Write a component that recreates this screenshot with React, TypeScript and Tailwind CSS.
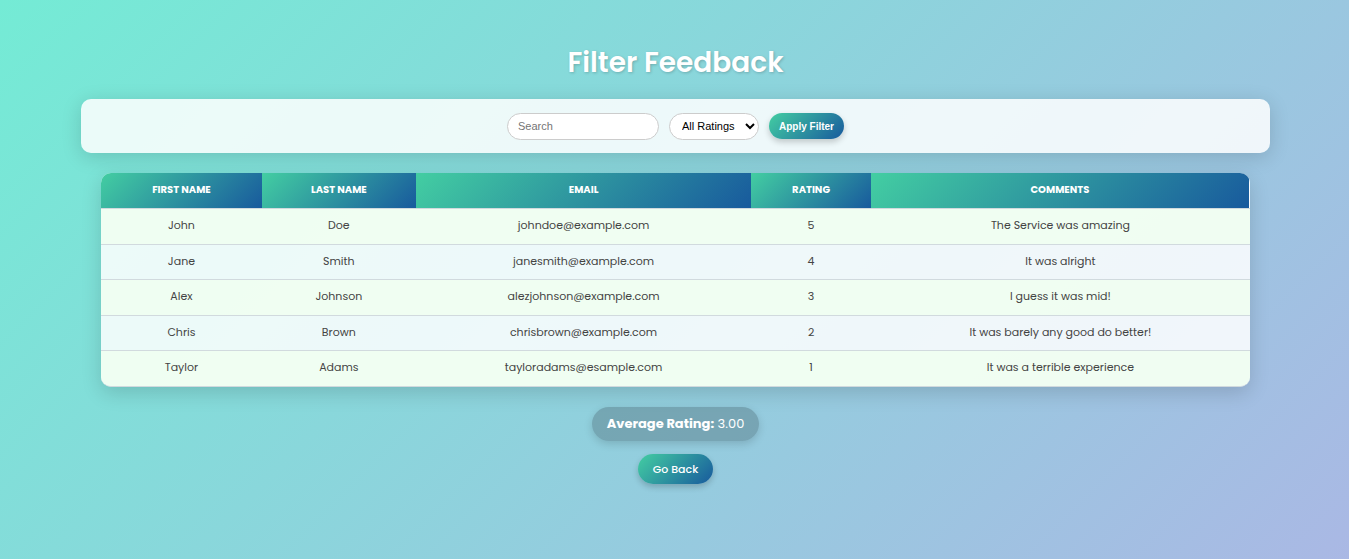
type Feedback = {
  firstName: string;
  lastName: string;
  email: string;
  rating: number;
  comments: string;
};

const feedback: Feedback[] = [
  { firstName: 'John', lastName: 'Doe', email: 'johndoe@example.com', rating: 5, comments: 'The Service was amazing' },
  { firstName: 'Jane', lastName: 'Smith', email: 'janesmith@example.com', rating: 4, comments: 'It was alright' },
  { firstName: 'Alex', lastName: 'Johnson', email: 'alezjohnson@example.com', rating: 3, comments: 'I guess it was mid!' },
  { firstName: 'Chris', lastName: 'Brown', email: 'chrisbrown@example.com', rating: 2, comments: 'It was barely any good do better!' },
  { firstName: 'Taylor', lastName: 'Adams', email: 'tayloradams@esample.com', rating: 1, comments: 'It was a terrible experience' },
];

const columns = [
  { label: 'First Name', width: 'w-[14%]' },
  { label: 'Last Name', width: 'w-[13.4%]' },
  { label: 'Email', width: 'w-[29.2%]' },
  { label: 'Rating', width: 'w-[10.4%]' },
  { label: 'Comments', width: 'w-[33%]' },
];

function FilterBar() {
  return (
    <form
      className="flex h-[54px] w-full items-center justify-center gap-2.5 rounded-[10px] bg-white/85 px-5 font-['Liberation_Sans',sans-serif] text-[11px] shadow-[0_4px_20px_rgba(0,0,0,0.15)]"
      onSubmit={(event) => event.preventDefault()}
    >
      <input
        type="text"
        aria-label="Search"
        placeholder="Search"
        className="h-[27px] w-[152px] rounded-full border border-[#cccccc] bg-white px-2.5 text-black placeholder:text-[#757575]"
      />
      <select
        aria-label="Rating"
        className="h-[27px] w-[90px] rounded-full border border-[#cccccc] bg-white pl-2 text-black"
      >
        <option>All Ratings</option>
        <option>5</option>
        <option>4</option>
        <option>3</option>
        <option>2</option>
        <option>1</option>
      </select>
      <button
        type="submit"
        className="h-[26px] w-[75px] rounded-full bg-[linear-gradient(135deg,#43cea2,#185a9d)] text-[10px] font-bold whitespace-nowrap text-white shadow-[0_3px_6px_rgba(0,0,0,0.2)]"
      >
        Apply Filter
      </button>
    </form>
  );
}

function FeedbackTable() {
  return (
    <div className="w-full px-5">
      <div className="overflow-hidden rounded-[10px] border-b border-[#d1dade] bg-white/85 shadow-[0_6px_20px_rgba(0,0,0,0.15)]">
        <table className="w-full table-fixed border-separate border-spacing-0 text-center text-[11px] leading-4">
          <thead>
            <tr>
              {columns.map((column) => (
                <th
                  key={column.label}
                  scope="col"
                  className={`${column.width} h-[35px] border-white/60 bg-[linear-gradient(135deg,#43cea2,#185a9d)] bg-clip-padding pb-px text-[10px] font-bold text-white uppercase last:border-r`}
                >
                  {column.label}
                </th>
              ))}
            </tr>
          </thead>
          <tbody className="text-[#444444]">
            {feedback.map((row) => (
              <tr
                key={row.email}
                className="odd:bg-[#f0fff0]/80 [&>td]:h-[35px] [&>td]:border-t [&>td]:border-[#d1dade] [&>td]:pb-[3px] odd:[&>td]:h-9"
              >
                <td>{row.firstName}</td>
                <td>{row.lastName}</td>
                <td>{row.email}</td>
                <td>{row.rating}</td>
                <td>{row.comments}</td>
              </tr>
            ))}
          </tbody>
        </table>
      </div>
    </div>
  );
}

export default function App() {
  const average = feedback.reduce((sum, row) => sum + row.rating, 0) / feedback.length;

  return (
    <main className="flex min-h-screen flex-col items-center bg-[linear-gradient(135deg,#74ebd5,#acb6e5_104%)] pt-[41px] pr-[79px] pb-10 pl-[81px] font-[Poppins,Inter,sans-serif]">
      <h1 className="text-[28px] leading-[44px] font-semibold text-white [text-shadow:1px_1px_3px_rgba(0,0,0,0.2)]">
        Filter Feedback
      </h1>
      <div className="mt-3.5 flex w-full flex-col gap-5">
        <FilterBar />
        <FeedbackTable />
      </div>
      <p className="mt-5 rounded-full bg-[#5a7d89]/50 px-[15px] py-[7px] text-[13px] leading-5 text-white shadow-[0_3px_8px_rgba(0,0,0,0.15)]">
        <strong className="font-bold">Average Rating:</strong> {average.toFixed(2)}
      </p>
      <a
        href="#"
        className="mt-[13px] rounded-full bg-[linear-gradient(135deg,#43cea2,#185a9d)] px-[15px] py-[7px] text-[11px] leading-4 font-medium text-white shadow-[0_3px_6px_rgba(0,0,0,0.2)]"
      >
        Go Back
      </a>
    </main>
  );
}
